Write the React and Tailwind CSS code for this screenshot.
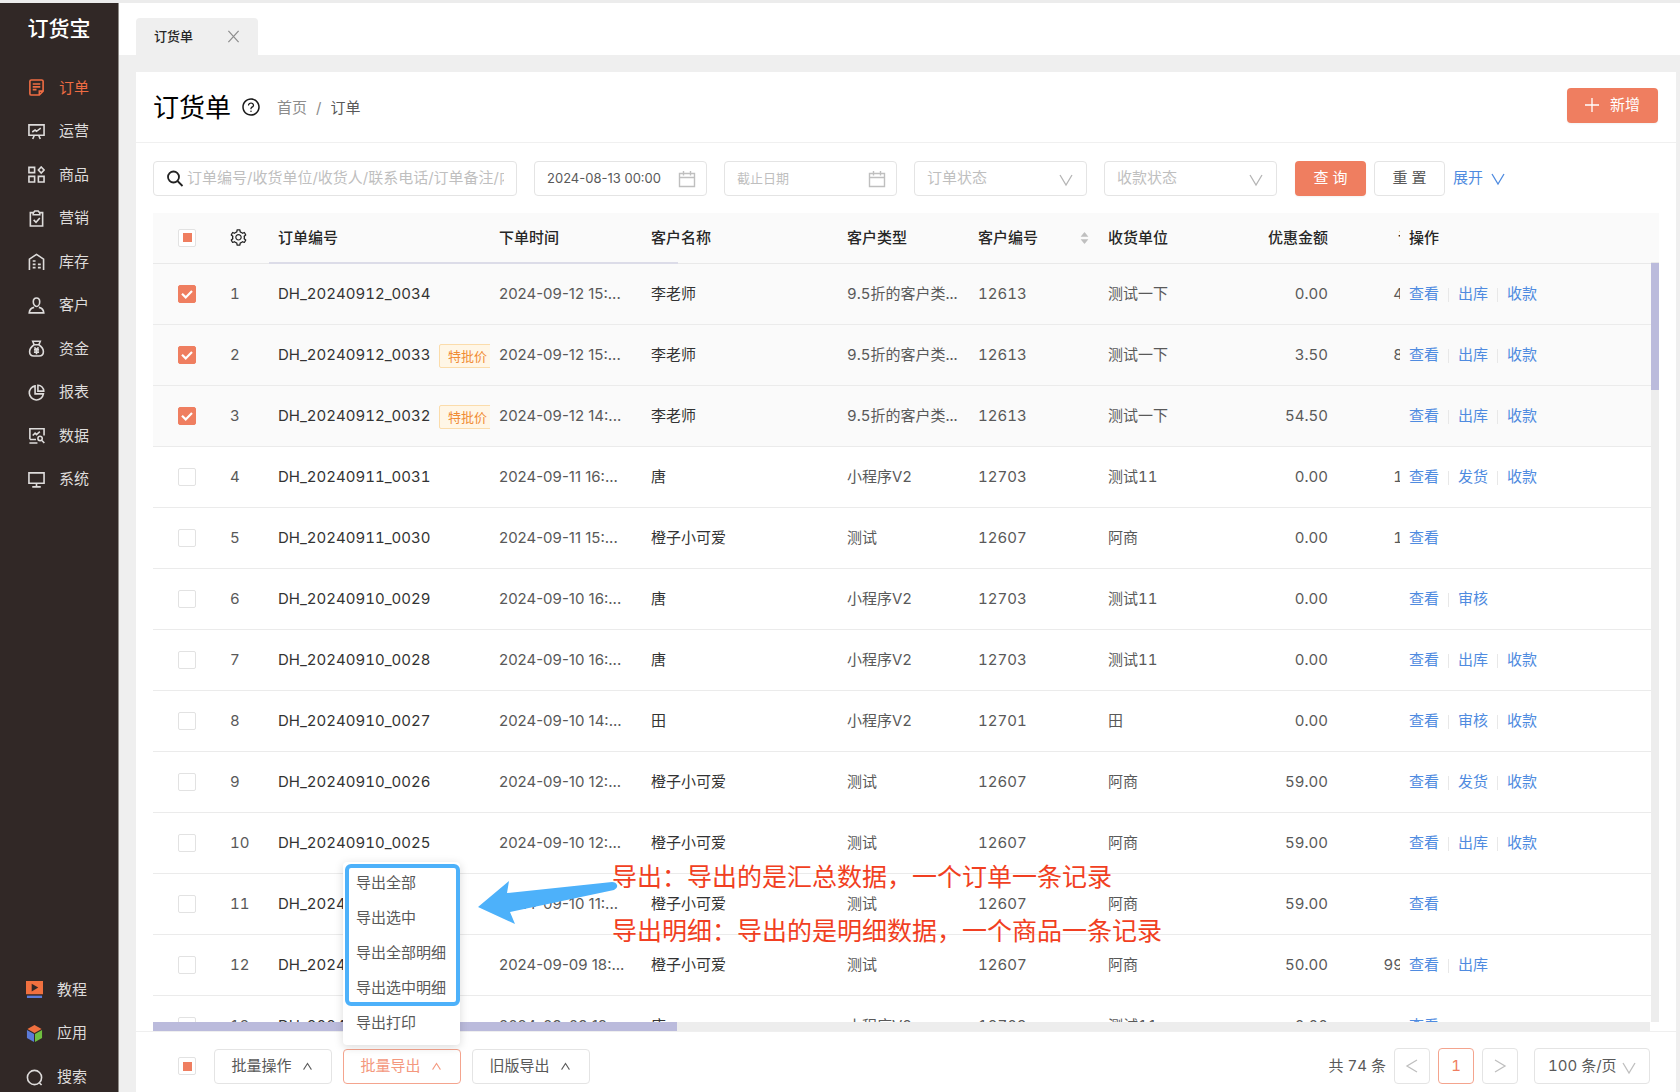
import { AiFillCaretDown, AiFillCaretUp, AiOutlineQuestionCircle, AiOutlineSetting } from 'react-icons/ai';

const MENU = [
  { name: '订单', icon: 'order', active: true },
  { name: '运营', icon: 'board' },
  { name: '商品', icon: 'goods' },
  { name: '营销', icon: 'clipboard' },
  { name: '库存', icon: 'stock' },
  { name: '客户', icon: 'user' },
  { name: '资金', icon: 'money' },
  { name: '报表', icon: 'pie' },
  { name: '数据', icon: 'data' },
  { name: '系统', icon: 'monitor' },
];

const FOOT_MENU = [
  { name: '教程', icon: 'video' },
  { name: '应用', icon: 'cube' },
  { name: '搜索', icon: 'search' },
];

// paths are drawn on a 18x18 grid
const ICONS = {
  order: <path d="M12 17H3.500a1.500 1.500 0 0 1-1.500-1.500v-13A1.500 1.500 0 0 1 3.500 1h11A1.500 1.500 0 0 1 16 2.500V13zM16 12.800h-4V17M5 5.300h8M5 8.300h8M5 11.300h4" />,
  board: <path d="M1 2h16v11H1zM4.500 9.500l3-2 1.500 1.300L13.500 5.500M6.500 13.500L5 17M11.500 13.500L13 17" />,
  goods: <path d="M1 1.500h6v5.500H1zM1 11h6v6H1zM11 11h6v6h-6zM14 1l3 3.200-3 3.200-3-3.200z" />,
  clipboard: <path d="M5.500 2.800H2.500V17h13V2.800h-3M5.500 5h7V3.200L10.800 1H7.200L5.500 3.200zM6 10.500L8.500 13l4-4.500" />,
  stock: <path d="M1.500 18V6.500L9 1.500l7.500 5V18M5 8.500h3M5 12h3M5 15.500h3M10.500 12h3M10.500 15.500h3" />,
  user: <path d="M9 1c2.200 0 3.400 1.600 3.400 4S11 10 9 10 5.600 7.400 5.600 5 6.800 1 9 1zM6.500 11c-3 .6-4.900 2.300-5.200 5.800h15.400c-.3-3.500-2.200-5.200-5.200-5.800" />,
  money: <path d="M6.500 5L5 1.300h8L11.500 5M6.500 5h5c3 2 4.800 4.600 4.800 7.400 0 2.900-1.800 4.500-4.500 4.500H6.200c-2.700 0-4.500-1.600-4.500-4.500C1.700 9.600 3.500 7 6.500 5zM6.800 7.800L9 10.200l2.200-2.400M6.300 10.500h5.400M6.300 12.800h5.400M9 10v5" />,
  pie: <path d="M7.500 2A7.500 7.500 0 1 0 16.300 10.500H7.500zM10.500 1.300v6.200h6.200a6.200 6.200 0 0 0-6.200-6.200z" />,
  data: <path d="M2 13V1.800h15V9M1.500 17H10M5 9l2.500-2.500L9 8l3.500-3.200M12.800 9.800a2.300 2.300 0 1 1 0 4.600 2.300 2.300 0 0 1 0-4.600zM14.500 14l2.800 3M2 13.300h6.500" />,
  monitor: <path d="M1 2h16v11H1zM9 13v3.800M4.500 16.800h9" />,
  search: <path d="M9 1.500a7.500 7.500 0 1 1 0 15 7.500 7.500 0 0 1 0-15zM13.500 14l3 3" />,
  video: (
    <g stroke="none">
      <path fill="#f0703f" d="M0 0h18v14H0z" />
      <path fill="#312826" d="M6 3l7 4-7 4z" />
      <path fill="#5b7bd8" d="M1 15.500h16V18H1z" />
    </g>
  ),
  cube: (
    <g stroke="none">
      <path fill="#f0703f" d="M9 0l7.500 4.200L9 8.400 1.500 4.200z" />
      <path fill="#5b7bd8" d="M1 5.300l7.500 4.200V18L1 13.700z" />
      <path fill="#6fbf3f" d="M17 5.300L9.500 9.500V18l7.500-4.300z" />
    </g>
  ),
};

const ROWS = [
  { no: 'DH_20240912_0034', time: '2024-09-12 15:...', name: '李老师', type: '9.5折的客户类...', code: '12613', unit: '测试一下', off: '0.00', sum: '4', ops: ['查看', '出库', '收款'], checked: true },
  { no: 'DH_20240912_0033', tag: '特批价', time: '2024-09-12 15:...', name: '李老师', type: '9.5折的客户类...', code: '12613', unit: '测试一下', off: '3.50', sum: '8', ops: ['查看', '出库', '收款'], checked: true },
  { no: 'DH_20240912_0032', tag: '特批价', time: '2024-09-12 14:...', name: '李老师', type: '9.5折的客户类...', code: '12613', unit: '测试一下', off: '54.50', sum: '', ops: ['查看', '出库', '收款'], checked: true },
  { no: 'DH_20240911_0031', time: '2024-09-11 16:...', name: '唐', type: '小程序V2', code: '12703', unit: '测试11', off: '0.00', sum: '1', ops: ['查看', '发货', '收款'] },
  { no: 'DH_20240911_0030', time: '2024-09-11 15:...', name: '橙子小可爱', type: '测试', code: '12607', unit: '阿商', off: '0.00', sum: '1', ops: ['查看'] },
  { no: 'DH_20240910_0029', time: '2024-09-10 16:...', name: '唐', type: '小程序V2', code: '12703', unit: '测试11', off: '0.00', sum: '', ops: ['查看', '审核'] },
  { no: 'DH_20240910_0028', time: '2024-09-10 16:...', name: '唐', type: '小程序V2', code: '12703', unit: '测试11', off: '0.00', sum: '', ops: ['查看', '出库', '收款'] },
  { no: 'DH_20240910_0027', time: '2024-09-10 14:...', name: '田', type: '小程序V2', code: '12701', unit: '田', off: '0.00', sum: '', ops: ['查看', '审核', '收款'] },
  { no: 'DH_20240910_0026', time: '2024-09-10 12:...', name: '橙子小可爱', type: '测试', code: '12607', unit: '阿商', off: '59.00', sum: '', ops: ['查看', '发货', '收款'] },
  { no: 'DH_20240910_0025', time: '2024-09-10 12:...', name: '橙子小可爱', type: '测试', code: '12607', unit: '阿商', off: '59.00', sum: '', ops: ['查看', '出库', '收款'] },
  { no: 'DH_20240910_0024', time: '2024-09-10 11:...', name: '橙子小可爱', type: '测试', code: '12607', unit: '阿商', off: '59.00', sum: '', ops: ['查看'] },
  { no: 'DH_20240909_0023', time: '2024-09-09 18:...', name: '橙子小可爱', type: '测试', code: '12607', unit: '阿商', off: '50.00', sum: '99', ops: ['查看', '出库'] },
  { no: 'DH_20240909_0022', time: '2024-09-09 18:...', name: '唐', type: '小程序V2', code: '12703', unit: '测试11', off: '0.00', sum: '', ops: ['查看'] },
];

const EXPORTS = ['导出全部', '导出选中', '导出全部明细', '导出选中明细', '导出打印'];

const MenuIcon = ({ name }) => (
  <svg viewBox="0 0 18 18" className="size-[17px] shrink-0" fill="none" stroke="currentColor" strokeWidth="1.7" aria-hidden="true">
    {ICONS[name]}
  </svg>
);

const Chevron = ({ d, className }) => (
  <svg viewBox="0 0 14 14" className={className} fill="none" stroke="currentColor" strokeWidth="1.3" aria-hidden="true">
    <path d={d} />
  </svg>
);

const DOWN = 'M1 2l6 10 6-10';
const UP = 'M2 11l5-8 5 8';

const Checkbox = ({ label, checked, partial }) => (
  <label className="relative block size-[18px]">
    <input
      type="checkbox"
      aria-label={label}
      defaultChecked={checked}
      className="block size-[18px] appearance-none rounded-xs border border-[#e2e2e2] bg-white checked:border-[#ef7e60] checked:bg-[#ef7e60]"
    />
    {checked && (
      <svg viewBox="0 0 18 18" className="pointer-events-none absolute inset-0 size-[18px]" fill="none" stroke="white" strokeWidth="2.2" aria-hidden="true">
        <path d="M4 8.800l3.700 3.600L14 6" />
      </svg>
    )}
    {partial && <span className="pointer-events-none absolute inset-0 m-auto size-[9px] bg-[#ef7e60]" />}
  </label>
);

const Sidebar = () => (
  <aside className="flex w-[119px] shrink-0 flex-col border-r border-[#8f8c88] bg-[#312826] text-[15px] text-[#dedcdb]">
    <div className="flex h-[52px] items-center justify-center text-[21px] font-medium text-white">订货宝</div>
    <nav className="mt-[11px] flex h-[435px] flex-col">
      {MENU.map((item) => (
        <a
          key={item.name}
          href="#"
          className={`flex flex-1 items-center gap-[14px] pl-7 ${item.active ? 'text-[#ef6c43]' : ''}`}
        >
          <MenuIcon name={item.icon} />
          {item.name}
        </a>
      ))}
    </nav>
    <nav className="mt-auto -mb-[7px] flex h-[131px] flex-col">
      {FOOT_MENU.map((item) => (
        <a key={item.name} href="#" className="flex flex-1 items-center gap-[14px] pl-[26px]">
          <MenuIcon name={item.icon} />
          {item.name}
        </a>
      ))}
    </nav>
  </aside>
);

const DateBox = ({ label, value }) => (
  <div className="flex h-[35px] w-[173px] items-center rounded-sm border border-[#e4e4e4] pr-[10px] pl-3">
    <input
      type="text"
      aria-label={label}
      placeholder={label}
      defaultValue={value}
      className="min-w-0 flex-1 text-[13px] text-[#595959] proportional-nums outline-none placeholder:text-[#bfbfbf]"
    />
    <svg viewBox="0 0 18 18" className="size-[18px] shrink-0" fill="none" stroke="#bfbfbf" strokeWidth="1.4" aria-hidden="true">
      <path d="M1.500 3.500h15v13h-15zM1.500 7.500h15M5.500 1v4.500M12.500 1v4.500" />
    </svg>
  </div>
);

const StatusSelect = ({ label }) => (
  <div className="relative w-[173px]">
    <select
      aria-label={label}
      className="h-[35px] w-full appearance-none rounded-sm border border-[#e4e4e4] bg-white px-3 text-[15px] text-[#bfbfbf]"
    >
      <option>{label}</option>
    </select>
    <Chevron d={DOWN} className="pointer-events-none absolute top-3 right-[14px] size-[14px] text-[#b5b5b5]" />
  </div>
);

const Filters = () => (
  <form className="flex items-center px-[17px] pt-[18px] pb-[17px]">
    <div className="flex h-[35px] w-[364px] items-center gap-[3px] rounded-sm border border-[#e4e4e4] px-3">
      <svg viewBox="0 0 18 18" className="size-[18px] shrink-0" fill="none" stroke="#222" strokeWidth="1.8" aria-hidden="true">
        <circle cx="7.5" cy="7" r="5.5" />
        <path d="M11.500 11l5 5" />
      </svg>
      <input
        type="text"
        aria-label="搜索订单"
        placeholder="订单编号/收货单位/收货人/联系电话/订单备注/内部备注"
        className="min-w-0 flex-1 text-[15px] outline-none placeholder:text-[#bfbfbf]"
      />
    </div>
    <div className="ml-[17px] flex gap-[17px]">
      <DateBox label="开始日期" value="2024-08-13 00:00" />
      <DateBox label="截止日期" />
      <StatusSelect label="订单状态" />
      <StatusSelect label="收款状态" />
    </div>
    <button type="button" className="ml-[18px] h-[35px] w-[71px] rounded-sm bg-[#ef7e60] text-[15px] text-white shadow-xs">查 询</button>
    <button type="button" className="ml-2 h-[35px] w-[71px] rounded-sm border border-[#e4e4e4] text-[15px] text-[#595959]">重 置</button>
    <a href="#" className="ml-2 flex items-center gap-2 text-[15px] text-[#4f8be0]">
      展开
      <Chevron d={DOWN} className="size-[14px]" />
    </a>
  </form>
);

const OrderTable = () => (
  <div className="relative mx-[17px] flex min-h-0 flex-1 overflow-hidden">
    <table className="w-full table-fixed self-start text-left text-[15px] whitespace-nowrap text-[#595959]">
      <colgroup>
        <col className="w-[68px]" />
        <col className="w-[48px]" />
        <col className="w-[221px]" />
        <col className="w-[152px]" />
        <col className="w-[196px]" />
        <col className="w-[131px]" />
        <col className="w-[130px]" />
        <col className="w-[121px]" />
        <col className="w-[117px]" />
        <col className="w-[63px]" />
        <col />
      </colgroup>
      <thead>
        <tr className="h-[50px] border-b border-[#e9e9e9] bg-[#fafafa] text-[#262626] *:font-medium">
          <th className="pl-[25px]"><Checkbox label="全选" partial /></th>
          <th className="pl-2"><AiOutlineSetting className="size-[19px]" /></th>
          <th className="pl-[9px]">订单编号</th>
          <th className="pl-[9px]">下单时间</th>
          <th className="pl-[9px]">客户名称</th>
          <th className="pl-[9px]">客户类型</th>
          <th className="pl-[9px]">
            <div className="flex items-center justify-between pr-[9px]">
              客户编号
              <span className="flex flex-col text-[#bfbfbf]">
                <AiFillCaretUp className="-mb-1 size-[11px]" />
                <AiFillCaretDown className="size-[11px]" />
              </span>
            </div>
          </th>
          <th className="pl-[9px]">收货单位</th>
          <th className="pr-[9px] text-right">优惠金额</th>
          <th className="overflow-hidden pl-[61px]">订单金额</th>
          <th className="pl-[9px]">操作</th>
        </tr>
      </thead>
      <tbody>
        {ROWS.map((row, i) => (
          <tr key={row.no} className={`h-[61px] border-b border-[#ebebeb] ${row.checked ? 'bg-[#fafafa]' : ''}`}>
            <td className="pl-[25px]"><Checkbox label={row.no} checked={row.checked} /></td>
            <td className="pt-[2px] pl-[9px]">{i + 1}</td>
            <td className="overflow-hidden pt-[2px] pl-[9px] text-[#333]">
              <div className="flex items-center gap-2">
                <span className="min-w-[153px]">{row.no}</span>
                {row.tag && (
                  <span className="h-6 shrink-0 rounded-xs border border-[#fbdcab] bg-[#fff6e6] px-2 text-[13px] leading-[22px] text-[#f08b33]">{row.tag}</span>
                )}
              </div>
            </td>
            <td className="pt-[2px] pl-[9px] proportional-nums">{row.time}</td>
            <td className="pt-[2px] pl-[9px] text-[#333]">{row.name}</td>
            <td className="pt-[2px] pl-[9px]">{row.type}</td>
            <td className="pt-[2px] pl-[9px]">{row.code}</td>
            <td className="pt-[2px] pl-[9px]">{row.unit}</td>
            <td className="pt-[2px] pr-[9px] text-right">{row.off}</td>
            <td className="overflow-hidden pt-[2px]"><div className="w-[66px] text-right">{row.sum}</div></td>
            <td className="pt-[2px] pl-[9px]">
              <div className="flex items-center">
                {row.ops.map((op, k) => (
                  <a key={op} href="#" className={`flex items-center text-[#4f8be0] ${k ? 'before:mx-[9px] before:h-[14px] before:w-px before:bg-[#e8e8e8]' : ''}`}>{op}</a>
                ))}
              </div>
            </td>
          </tr>
        ))}
      </tbody>
    </table>
    <div className="flex w-2 shrink-0 flex-col">
      <div className="h-[50px] border-b border-[#e9e9e9] bg-[#fafafa]" />
      <div className="flex-1 bg-[#ededed]">
        <div className="h-[127px] bg-[#bbbbdc]" />
      </div>
    </div>
    <div className="absolute top-[49px] left-[116px] h-[2px] w-[409px] bg-[#dcdce8]" />
  </div>
);

const BatchButton = ({ children, active }) => (
  <button
    type="button"
    className={`flex h-[35px] w-[118px] items-center justify-center gap-[10px] rounded-sm border pr-[2px] text-[15px] ${active ? 'border-[#f4a48e] text-[#f4987e]' : 'border-[#e4e4e4] text-[#595959]'}`}
  >
    {children}
    <Chevron d={UP} className="size-[11px]" />
  </button>
);

const ExportMenu = () => (
  <div className="absolute bottom-[39px] left-0 z-10 w-[117px] rounded-sm bg-white py-1 shadow-[0_2px_10px_rgba(0,0,0,0.15)]">
    {EXPORTS.map((item) => (
      <button key={item} type="button" className="block h-[35px] w-full pl-[13px] text-left text-[15px] text-[#595959]">{item}</button>
    ))}
    <div className="pointer-events-none absolute top-[2px] right-0 left-[2px] h-[142px] rounded-md border-4 border-[#4db1fa]" />
  </div>
);

// arrow and red remarks that explain the export menu
const Notes = () => (
  <div className="pointer-events-none absolute bottom-[123px] left-[134px] z-10 h-[100px] w-[700px] text-[25px] whitespace-nowrap text-[#f13f22]">
    <svg viewBox="0 0 142 46" className="absolute top-[19px] left-0 h-[46px] w-[142px]" fill="#4db1fa" aria-hidden="true">
      <path d="M1 27L32 1l-2 12L135 2q4 0 5 3t-3 5L33 32l5 12z" />
    </svg>
    <p className="absolute top-[-3px] left-[135px] leading-[38px]">导出：导出的是汇总数据，一个订单一条记录</p>
    <p className="absolute top-[51px] left-[135px] leading-[38px]">导出明细：导出的是明细数据，一个商品一条记录</p>
  </div>
);

const Footer = () => (
  <footer className="flex h-[61px] shrink-0 items-center border-t border-[#efefef] pt-2 pr-[26px] pl-[42px] text-[15px] text-[#595959]">
    <Checkbox label="选择本页" partial />
    <div className="ml-[18px] flex gap-[11px]">
      <BatchButton>批量操作</BatchButton>
      <div className="relative">
        <BatchButton active>批量导出</BatchButton>
        <ExportMenu />
        <Notes />
      </div>
      <BatchButton>旧版导出</BatchButton>
    </div>
    <div className="ml-auto flex items-center">
      共 74 条
      <button type="button" aria-label="上一页" className="ml-2 flex size-[36px] items-center justify-center rounded-sm border border-[#e4e4e4] text-[#bfbfbf]">
        <Chevron d="M12 1L2 7l10 6" className="size-[14px]" />
      </button>
      <button type="button" className="ml-2 size-[36px] rounded-sm border border-[#f4a48e] text-[#ef7e60]">1</button>
      <button type="button" aria-label="下一页" className="ml-2 flex size-[36px] items-center justify-center rounded-sm border border-[#e4e4e4] text-[#bfbfbf]">
        <Chevron d="M2 1l10 6-10 6" className="size-[14px]" />
      </button>
      <div className="relative ml-4 w-[116px]">
        <select aria-label="每页条数" className="h-[36px] w-full appearance-none rounded-sm border border-[#e4e4e4] bg-white pl-[13px]">
          <option>100 条/页</option>
        </select>
        <Chevron d={DOWN} className="pointer-events-none absolute top-[13px] right-[14px] size-[14px] text-[#bfbfbf]" />
      </div>
    </div>
  </footer>
);

export default function App() {
  return (
    <div className="flex h-screen overflow-hidden border-t-3 border-[#ececec] bg-[#efefef] font-['Inter','Noto_Sans_CJK_SC',sans-serif] tabular-nums">
      <Sidebar />
      <div className="flex min-w-0 flex-1 flex-col">
        <div className="flex h-[52px] shrink-0 items-end bg-white pl-[17px]">
          <div className="flex h-[37px] w-[122px] items-center justify-between rounded-t-sm bg-[#efefef] px-[18px] text-[13px] font-medium text-[#262626]">
            订货单
            <button type="button" aria-label="关闭">
              <Chevron d="M1.500 1l11 12M12.500 1l-11 12" className="size-[13px] text-[#8c8c8c]" />
            </button>
          </div>
        </div>
        <main className="mt-[17px] mr-1 ml-[17px] flex min-h-0 flex-1 flex-col bg-white">
          <header className="flex h-[71px] shrink-0 items-center border-b border-[#f0f0f0] pr-[18px] pl-[17px]">
            <h1 className="text-[26px] text-black">订货单</h1>
            <AiOutlineQuestionCircle className="ml-[10px] size-[20px] text-[#1a1a1a]" />
            <nav className="ml-[16px] flex gap-[9px] pt-[2px] text-[15px] text-[#8c8c8c]">
              <a href="#">首页</a>
              <span>/</span>
              <span className="text-[#595959]">订单</span>
            </nav>
            <button type="button" className="mb-[4px] ml-auto flex h-[35px] w-[91px] items-center justify-center gap-[11px] rounded-sm bg-[#ef7e60] text-[15px] text-white shadow-xs">
              <Chevron d="M7 0v14M0 7h14" className="size-[14px]" />
              新增
            </button>
          </header>
          <Filters />
          <OrderTable />
          <div className="mr-[26px] ml-[17px] h-[9px] shrink-0 bg-[#ededed]">
            <div className="h-full w-[524px] bg-[#bbbbdc]" />
          </div>
          <Footer />
        </main>
      </div>
    </div>
  );
}
